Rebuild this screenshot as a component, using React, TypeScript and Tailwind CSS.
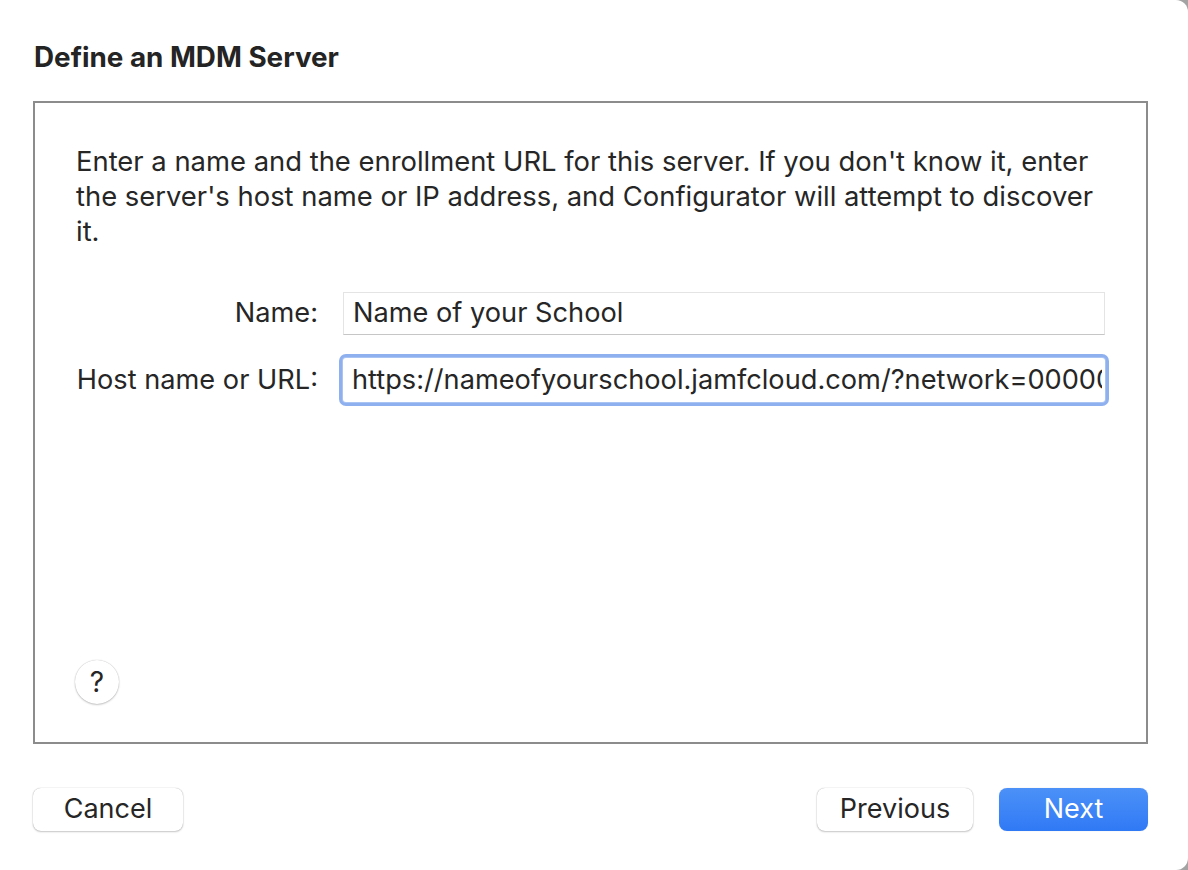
import React from "react";

export default function App() {
  return (
    <div className="w-[1188px] h-[870px] bg-[#a3a3a3] overflow-hidden" style={{ fontFamily: "Inter, 'Noto Sans', sans-serif" }}>
      <div className="w-[1188px] h-[870px] bg-white rounded-tr-[12px] rounded-br-[12px] flex flex-col pl-[33px] pr-[40px] text-[#262626]">
        <h1 className="pt-[42px] text-[27.8px] leading-[30px] font-bold text-[#242424] pl-[1px]">Define an MDM Server</h1>
        <div className="mt-[29px] h-[643px] border-2 border-[#8c8c8c] flex flex-col">
          <p className="pt-[41px] pl-[41px] pr-[40px] text-[27.4px] leading-[35px]">
            Enter a name and the enrollment URL for this server. If you don't know it, enter the server's host name or IP address, and Configurator will attempt to discover it.
          </p>
          <div className="mt-[43px] pl-[41px] grid grid-cols-[242px_762px] gap-x-[25px] gap-y-[23px] items-center text-[27.2px]">
            <div className="text-right whitespace-nowrap">Name:</div>
            <div className="h-[43px] border border-[#e4e4e4] border-b-[#c6c6c6] bg-white flex items-center pl-[9px] overflow-hidden whitespace-nowrap">
              Name of your School
            </div>
            <div className="text-right whitespace-nowrap">Host name or URL:</div>
            <div className="h-[44px] bg-white flex items-center pl-[9px] pr-[3px] overflow-hidden whitespace-nowrap rounded-[3px] shadow-[0_0_0_1px_#a9c3f3,0_0_0_4px_#8fb0ee]">
              <span className="overflow-hidden whitespace-nowrap">https://nameofyourschool.jamfcloud.com/?network=000000000000</span>
            </div>
          </div>
          <div className="mt-auto pb-[38px] pl-[40px]">
            <div className="w-[44px] h-[44px] rounded-full bg-white shadow-[0_0_1px_rgba(0,0,0,0.3),0_1px_2px_rgba(0,0,0,0.2)] flex items-center justify-center text-[28px] text-[#262626]">?</div>
          </div>
        </div>
        <div className="mt-[44px] flex items-center text-[27px]">
          <button className="w-[150px] h-[43px] rounded-[8px] bg-white shadow-[0_0_1px_rgba(0,0,0,0.35),0_1px_2px_rgba(0,0,0,0.2)] text-[#262626]">Cancel</button>
          <div className="ml-auto flex gap-[26px]">
            <button className="w-[156px] h-[43px] rounded-[8px] bg-white shadow-[0_0_1px_rgba(0,0,0,0.35),0_1px_2px_rgba(0,0,0,0.2)] text-[#262626]">Previous</button>
            <button className="w-[149px] h-[43px] rounded-[8px] bg-gradient-to-b from-[#4c91f8] to-[#2f79f5] text-white shadow-[0_0_1px_rgba(0,0,0,0.2)]">Next</button>
          </div>
        </div>
      </div>
    </div>
  );
}
